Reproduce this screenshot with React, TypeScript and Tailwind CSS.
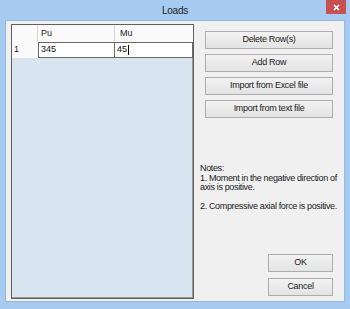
import React from "react";

const Btn = ({ label, className = "" }: { label: string; className?: string }) => (
  <button
    className={`h-[18px] w-full border border-[#adadad] bg-gradient-to-b from-[#f2f2f2] to-[#e3e3e3] text-[9px] tracking-[-0.3px] text-[#1a1a1a] ${className}`}
  >
    {label}
  </button>
);

const App = () => {
  return (
    <div
      className="flex h-[309px] w-[350px] flex-col bg-[#a6caf0] px-[5px] pb-[7px]"
      style={{ fontFamily: '"Liberation Sans", Arial, sans-serif' }}
    >
      {/* title bar */}
      <div className="relative flex h-[20px] shrink-0 items-center justify-center">
        <span className="text-[10px] tracking-[-0.2px] text-[#222]">Loads</span>
        <div className="absolute -right-[1px] top-0 flex h-[14px] w-[20px] items-center justify-center bg-[#c75050]">
          <svg width="7" height="7" viewBox="0 0 7 7">
            <path d="M1 1L6 6M6 1L1 6" stroke="#fff" strokeWidth="1.6" />
          </svg>
        </div>
      </div>

      {/* client */}
      <div className="flex flex-1 border border-[#94b6dc] bg-[#f0f0f0] pl-[5px] pt-[3px]">
        {/* grid */}
        <div className="flex h-[275px] w-[183px] flex-col border border-[#5f5f5f] bg-[#d8e4f0] shadow-[inset_-1px_-1px_0_#9a9a9a]">
          <div className="flex h-[17px] bg-[#fafafa] text-[9px] text-[#222]">
            <div className="w-[26px] border-r border-[#d6d6d6]" />
            <div className="flex w-[77px] items-center border-r border-[#d6d6d6] pl-[3px]">Pu</div>
            <div className="flex flex-1 items-center pl-[5px]">Mu</div>
          </div>
          <div className="flex h-[16px] text-[9px] text-[#111]">
            <div className="flex w-[26px] items-center bg-[#fafafa] pl-[2px] text-[#1a1a66]">1</div>
            <div className="flex w-[77px] items-center border border-[#6a6a6a] bg-white pl-[2px]">345</div>
            <div className="flex flex-1 items-center border-y border-r border-[#6a6a6a] bg-white pl-[2px]">
              45<span className="ml-[1px] inline-block h-[10px] w-[1px] bg-black" />
            </div>
          </div>
        </div>

        {/* right panel */}
        <div className="ml-[11px] flex w-[128px] flex-col pt-[7px]">
          <div className="flex flex-col gap-[5px]">
            <Btn label="Delete Row(s)" />
            <Btn label="Add Row" />
            <Btn label="Import from Excel file" />
            <Btn label="Import from text file" />
          </div>

          <div className="ml-[-5px] mt-[46px] whitespace-nowrap text-[9px] leading-[9.6px] tracking-[-0.35px] text-[#1a1a1a]">
            <div>Notes:</div>
            <div>1. Moment in the negative direction of</div>
            <div>axis is positive.</div>
            <div className="h-[9.6px]" />
            <div>2. Compressive axial force is positive.</div>
          </div>

          <div className="mt-auto mb-[5px] flex flex-col items-end gap-[6px]">
            <Btn label="OK" className="!w-[65px]" />
            <Btn label="Cancel" className="!w-[65px]" />
          </div>
        </div>
      </div>
    </div>
  );
};

export default App;
